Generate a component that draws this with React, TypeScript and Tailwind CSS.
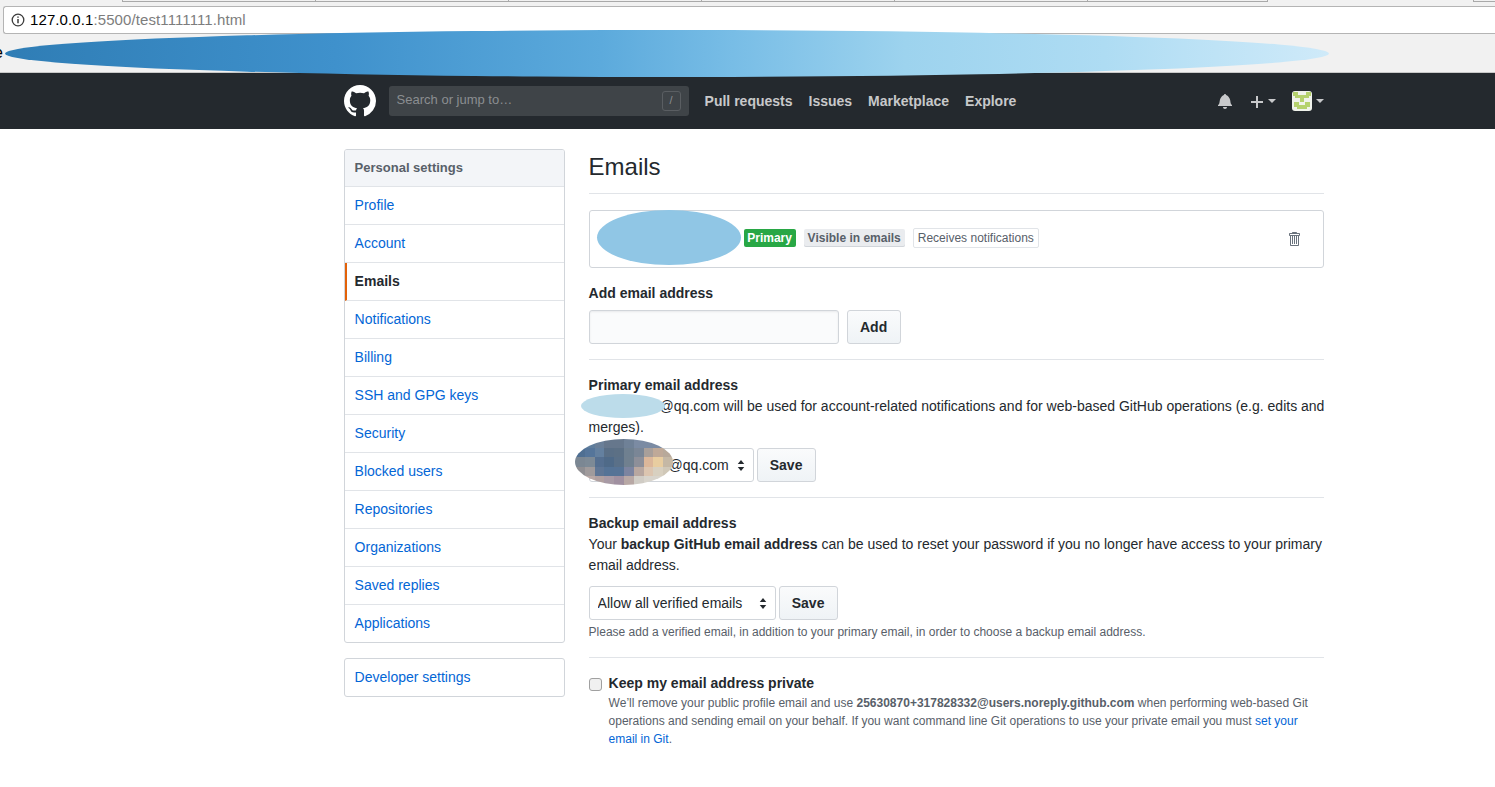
import React from 'react';

const sideLinks = ['Profile', 'Account', 'Emails', 'Notifications', 'Billing', 'SSH and GPG keys', 'Security', 'Blocked users', 'Repositories', 'Organizations', 'Saved replies', 'Applications'];

// pixelated redaction colours, read from the screenshot
const mosaic = [
  '#5f7d9c', '#5f7d9c', '#6a7f98', '#66778c', '#66778c', '#6f8197', '#7b8ba3', '#7b8ba3', '#7b8ba3', '#7b8ba3',
  '#4f6f92', '#55759a', '#64809f', '#5a6f86', '#5c7085', '#6f8090', '#7a8696', '#a89f9a', '#bfa998', '#b8a99a',
  '#7b8793', '#7d8a96', '#556f90', '#4f6a88', '#5a7088', '#70808f', '#8d8f99', '#dcb79a', '#e8cda0', '#c5b8a5',
  '#8f8e92', '#a09b9c', '#5f7695', '#557396', '#567396', '#7c84a0', '#b8a7a0', '#dcc5b0', '#d8d0c0', '#d0c8b8',
  '#a89a9a', '#b8a8a5', '#b0a0a0', '#a89aa5', '#a090a0', '#b8a8a5', '#d0ccc5', '#d8d4cc', '#d8d4cc', '#d8d4cc',
];

const Caret = ({ className }: { className: string }) => (
  <span className={`inline-block border-x-[4px] border-t-[4px] border-x-transparent ${className}`} />
);

const Updown = () => (
  <svg viewBox="0 0 8 14" className="absolute right-[9px] top-[11px] w-[8px] h-[13px] pointer-events-none" fill="#24292e">
    <path d="M4 1L7.500 5.500H.5z" />
    <path d="M4 13L.5 8.500h7z" />
  </svg>
);

const ActionButton = ({ label, className }: { label: string; className: string }) => (
  <button className={`h-[34px] rounded-[3px] border border-[#d1d5da] bg-gradient-to-b from-[#fafbfc] to-[#eff3f6] text-sm font-bold text-[#24292e] ${className}`}>
    {label}
  </button>
);

const BrowserChrome = () => (
  <div className="bg-[#f1f1f1]">
    <div className="h-[6px] flex pl-[122px] overflow-hidden">
      {[0, 1, 2, 3, 4].map((i) => (
        <div key={i} className="w-[193px] h-[2px] border-l border-b border-[#a9a9a9] shrink-0" />
      ))}
      <div className="w-[181px] h-[2px] border-x border-b border-[#a9a9a9] shrink-0 mr-[205px]" />
      <div className="w-[22px] h-[2px] border-l border-b border-[#a9a9a9] shrink-0" />
    </div>
    <div className="h-[28px] flex items-center bg-white border-y border-l border-[#b4b4b4] rounded-l-[3px] ml-[3px] pl-[7px] text-[15px] tracking-[0.1px]">
      <svg viewBox="0 0 14 14" className="w-[14px] h-[14px] mr-[5px]" fill="none" stroke="#3c3c3c" strokeWidth="1.300">
        <circle cx="7" cy="7" r="5.800" />
        <path d="M7 6v4.200M7 3.500v1.300" strokeWidth="1.500" />
      </svg>
      <span className="text-black">127.0.0.1</span>
      <span className="text-[#7d7d7d]">:5500/test1111111.html</span>
    </div>
    <div className="h-[39px] flex items-center text-[16px] text-black border-b border-[#c8c8c8] -ml-[6px]">e</div>
  </div>
);

const Navbar = () => (
  <header className="h-[56px] bg-[#24292e] text-sm font-bold text-white/75">
    <div className="w-[980px] h-full ml-[343.6px] flex items-center">
      <svg viewBox="0 0 16 16" className="w-[32px] h-[32px] mr-[13px]" fill="white">
        <path d="M8 0C3.58 0 0 3.58 0 8c0 3.54 2.29 6.53 5.47 7.59.4.07.55-.17.55-.38 0-.19-.01-.82-.01-1.49-2.010.37-2.530-.49-2.690-.94-.09-.23-.48-.94-.82-1.130-.28-.15-.68-.52-.01-.53.63-.01 1.080.58 1.230.82.72 1.210 1.870.87 2.330.66.07-.52.28-.87.51-1.070-1.780-.2-3.640-.89-3.640-3.950 0-.87.31-1.590.82-2.150-.08-.2-.36-1.020.08-2.120 0 0 .67-.21 2.200.82.64-.18 1.320-.27 2-.27.68 0 1.360.09 2 .27 1.530-1.040 2.200-.82 2.200-.82.44 1.100.16 1.920.08 2.120.51.56.82 1.270.82 2.150 0 3.070-1.870 3.750-3.650 3.950.29.25.54.73.54 1.480 0 1.070-.01 1.930-.01 2.200 0 .21.15.46.55.38A8.013 8.013 0 0016 8c0-4.420-3.580-8-8-8z" />
      </svg>
      <div className="w-[300px] h-[30px] -mt-[1px] rounded-[3px] bg-[#3f4448] flex items-center justify-between px-[8px] mr-[16px] font-normal text-[13px] text-[#8b8e91]">
        <span>Search or jump to…</span>
        <span className="w-[19px] h-[20px] rounded-[3px] border border-[#5a5e62] flex items-center justify-center text-[11px]">/</span>
      </div>
      <nav className="flex gap-4 -mt-[1px]">
        <span>Pull requests</span>
        <span>Issues</span>
        <span>Marketplace</span>
        <span>Explore</span>
      </nav>
      <div className="ml-auto flex items-center">
        <svg viewBox="0 0 14 16" className="w-[14px] h-[16px] mr-[19px]" fill="#c8c9cb">
          <path d="M14 12v1H0v-1l.73-.58c.77-.77.81-2.550 1.190-4.420C2.690 3.230 6 2 6 2c0-.55.45-1 1-1s1 .45 1 1c0 0 3.390 1.230 4.160 5 .38 1.880.42 3.660 1.190 4.420l.66.58H14zm-7 4c1.110 0 2-.89 2-2H5c0 1.110.89 2 2 2z" />
        </svg>
        <svg viewBox="0 0 12 16" className="w-[12px] h-[16px] mr-[5px] mt-[2px]" fill="#c8c9cb">
          <path d="M12 9H7v5H5V9H0V7h5V2h2v5h5v2z" />
        </svg>
        <Caret className="border-t-[#c8c9cb] mr-[16px]" />
        <svg viewBox="0 0 20 20" className="w-[20px] h-[20px] rounded-[3px] mr-[4px] bg-[#f0f3ec]">
          <path d="M1 1h5v3h8V1h5v4h-2v2H3V5H1zM8 7h4v4H8zM2 11h5v3h6v-3h5v5h-3v2H5v-2H2z" fill="#b5d26e" />
        </svg>
        <Caret className="border-t-[#c8c9cb]" />
      </div>
    </div>
  </header>
);

const Sidebar = () => (
  <aside className="w-[221px] shrink-0 mr-[24px]">
    <div className="rounded-[3px] border border-[#d1d5da] overflow-hidden">
      <div className="h-[37px] flex items-center px-[10px] bg-[#f3f5f8] border-b border-[#e1e4e8] text-[13px] font-bold text-[#586069]">
        Personal settings
      </div>
      {sideLinks.map((name, i) =>
        name === 'Emails' ? (
          <div key={name} className="h-[38px] flex items-center pl-[8px] pr-[10px] pb-px border-l-2 border-l-[#e36209] border-b border-b-[#e1e4e8] text-sm font-bold text-[#24292e]">
            {name}
          </div>
        ) : (
          <div key={name} className={`flex items-center px-[10px] pb-px text-sm text-[#0366d6] ${i < sideLinks.length - 1 ? 'h-[38px] border-b border-[#e1e4e8]' : 'h-[37px]'}`}>
            {name}
          </div>
        )
      )}
    </div>
    <div className="mt-[15px] h-[39px] flex items-center px-[10px] pb-px rounded-[3px] border border-[#d1d5da] text-sm text-[#0366d6]">
      Developer settings
    </div>
  </aside>
);

const EmailsPanel = () => (
  <main className="w-[735px] text-sm leading-[21px] text-[#24292e]">
    <div className="h-[45px] border-b border-[#e1e4e8] text-[24px] leading-[36px]">Emails</div>

    <div className="relative mt-[16px] h-[58px] rounded-[3px] border border-[#d1d5da] flex items-center pl-[154px] pb-[2px] text-xs">
      <span className="h-[18px] w-[52px] text-center rounded-[2px] bg-[#28a745] text-white font-bold leading-[18px]">Primary</span>
      <span className="h-[18px] px-[4px] ml-[8px] rounded-[2px] bg-[#eaecef] text-[#586069] font-bold leading-[18px] shadow-[inset_0_-1px_0_#d1d5da]">Visible in emails</span>
      <span className="h-[20px] px-[4px] ml-[8px] rounded-[2px] border border-[#e1e4e8] text-[#586069] leading-[18px]">Receives notifications</span>
      <svg viewBox="0 0 12 16" className="absolute right-[23px] top-[20px] w-[12px] h-[16px]" fill="#6a737d">
        <path d="M11 2H9c0-.55-.45-1-1-1H5c-.55 0-1 .45-1 1H2c-.55 0-1 .45-1 1v1c0 .55.45 1 1 1v9c0 .55.45 1 1 1h7c.55 0 1-.45 1-1V5c.55 0 1-.45 1-1V3c0-.55-.45-1-1-1zm-1 12H3V5h1v8h1V5h1v8h1V5h1v8h1V5h1v9zm1-10H2V3h9v1z" />
      </svg>
    </div>

    <div className="mt-[15px] font-bold">Add email address</div>
    <div className="mt-[6px] pb-[15px] border-b border-[#e1e4e8] flex gap-[8px]">
      <input className="w-[250px] h-[34px] rounded-[3px] border border-[#d1d5da] bg-[#fafbfc] shadow-[inset_0_1px_2px_rgba(27,31,35,0.075)]" />
      <ActionButton label="Add" className="w-[54px]" />
    </div>

    <div className="mt-[15px] font-bold">Primary email address</div>
    <p className="-mr-[4px]">
      <span className="inline-block w-[71px]" />@qq.com will be used for account-related notifications and for web-based GitHub operations (e.g. edits and merges).
    </p>
    <div className="mt-[10px] pb-[15px] border-b border-[#e1e4e8] flex gap-[3px]">
      <div className="relative">
        <select className="appearance-none w-[165px] h-[34px] rounded-[3px] border border-[#d1d5da] bg-white pl-[79px] text-sm text-[#24292e]">
          <option>@qq.com</option>
        </select>
        <Updown />
      </div>
      <ActionButton label="Save" className="w-[59px]" />
    </div>

    <div className="mt-[15px] font-bold">Backup email address</div>
    <p>
      Your <b>backup GitHub email address</b> can be used to reset your password if you no longer have access to your primary email address.
    </p>
    <div className="mt-[10px] flex gap-[3px]">
      <div className="relative">
        <select className="appearance-none w-[187px] h-[34px] rounded-[3px] border border-[#d1d5da] bg-white pl-[8px] text-sm text-[#24292e]">
          <option>Allow all verified emails</option>
        </select>
        <Updown />
      </div>
      <ActionButton label="Save" className="w-[59px]" />
    </div>
    <p className="mt-[3px] pb-[16px] border-b border-[#e1e4e8] text-xs leading-[18px] text-[#586069]">
      Please add a verified email, in addition to your primary email, in order to choose a backup email address.
    </p>

    <div className="mt-[15px] flex">
      <input type="checkbox" className="appearance-none w-[13px] h-[13px] mt-[5px] mr-[7px] shrink-0 rounded-[3px] border border-[#a0a0a0] bg-[#f0f0f0]" />
      <div>
        <div className="font-bold">Keep my email address private</div>
        <p className="text-xs leading-[18px] text-[#586069]">
          We’ll remove your public profile email and use <b>25630870+317828332@users.noreply.github.com</b> when performing web-based Git operations and sending email on your behalf. If you want command line Git operations to use your private email you must <span className="text-[#0366d6]">set your email in Git</span>.
        </p>
      </div>
    </div>
  </main>
);

export default function App() {
  return (
    <div className="relative min-h-[787px] overflow-hidden bg-white font-['Liberation_Sans',Arial,sans-serif]">
      <BrowserChrome />
      <Navbar />
      <div className="w-[980px] ml-[343.6px] pt-[20px] flex">
        <Sidebar />
        <EmailsPanel />
      </div>

      {/* redaction blobs painted over the screenshot */}
      <div className="absolute left-[5px] top-[30px] w-[1324px] h-[47px] rounded-[50%] bg-[linear-gradient(90deg,#2f7db5_0%,#3f91cc_25%,#5caadc_45%,#78bde6_55%,#9dd3ee_68%,#aedcf3_83%,#cfeaf9_100%)]" />
      <div className="absolute left-[597px] top-[210px] w-[144px] h-[55px] rounded-[50%] bg-[#90c6e5]" />
      <div className="absolute left-[581px] top-[394px] w-[84px] h-[24px] rounded-[50%] bg-[#bcdcea]" />
      <div className="absolute left-[575px] top-[439px] w-[98px] h-[46px] rounded-[50%] overflow-hidden grid grid-cols-10 grid-rows-5">
        {mosaic.map((c, i) => (
          <div key={i} style={{ backgroundColor: c }} />
        ))}
      </div>
    </div>
  );
}
